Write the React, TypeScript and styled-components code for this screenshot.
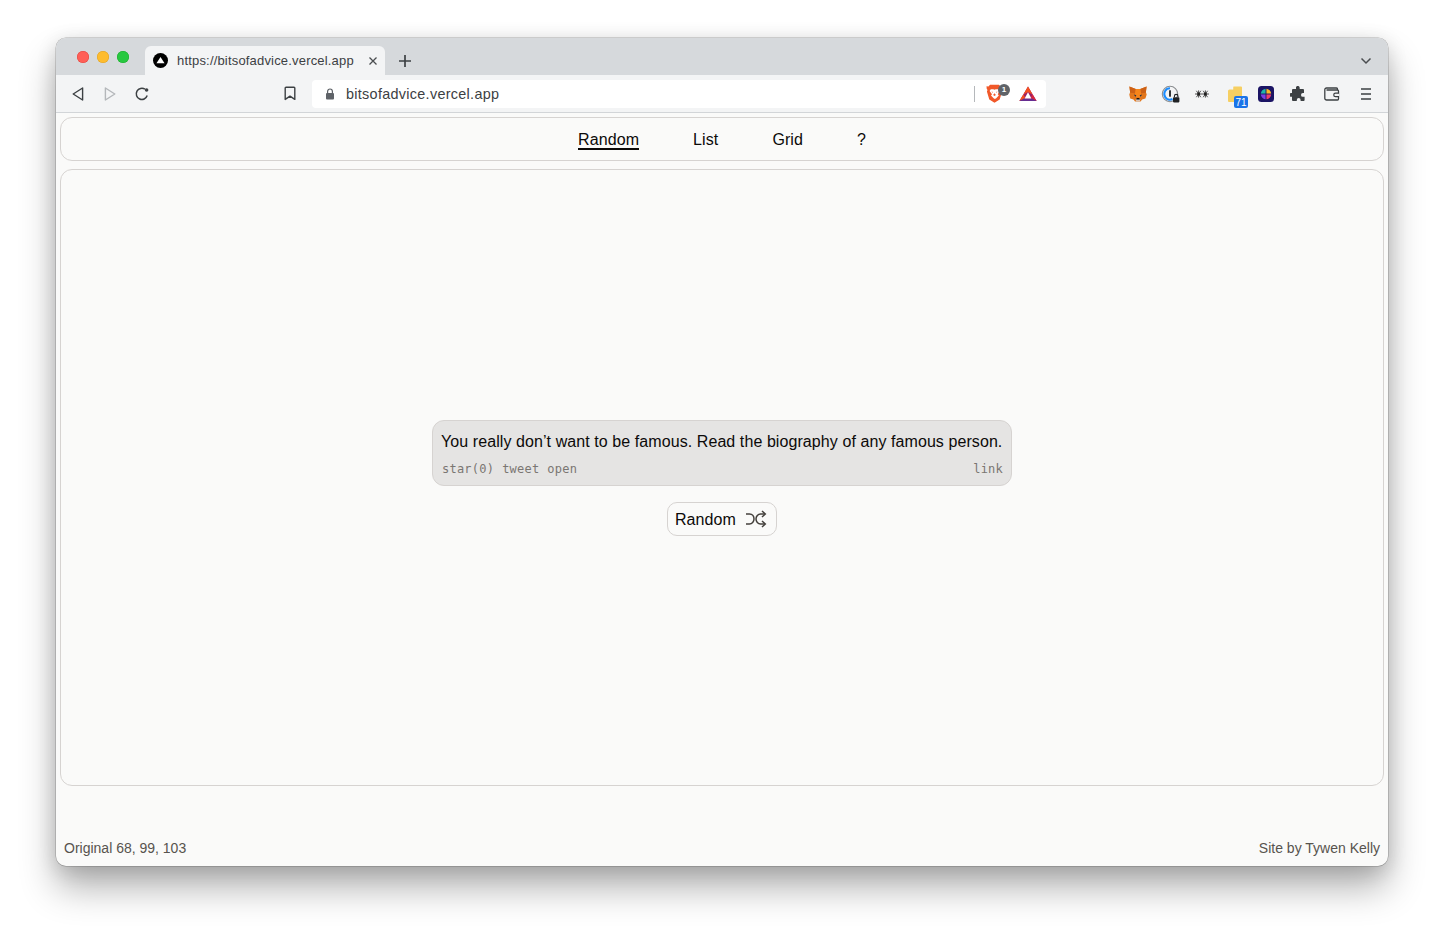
import React from "react";
import styled, { createGlobalStyle } from "styled-components";

const Global = createGlobalStyle`
  html, body { margin: 0; padding: 0; background: #fff; }
  body { font-family: "Liberation Sans", Arial, sans-serif; width: 1444px; height: 940px; overflow: hidden; }
`;
const Desktop = styled.div`
  padding: 38px 56px 74px;
  height: 940px;
  box-sizing: border-box;
`;
const Win = styled.div`
  height: 828px;
  border-radius: 10px;
  overflow: hidden;
  display: flex;
  flex-direction: column;
  background: #fafaf9;
  box-shadow: 0 0 0 0.5px rgba(0,0,0,.28), 0 22px 36px rgba(0,0,0,.30), 0 4px 20px rgba(0,0,0,.14);
`;
const TabStrip = styled.div`
  height: 37px;
  flex: none;
  background: #d6d9dc;
  display: flex;
  align-items: flex-end;
  padding-left: 21px;
  padding-right: 14px;
  box-sizing: border-box;
`;
const Lights = styled.div`
  display: flex;
  gap: 8px;
  align-self: flex-start;
  margin-top: 13px;
  width: 68px;
  flex: none;
`;
const Light = styled.span<{ $c: string; $b: string }>`
  width: 12px;
  height: 12px;
  border-radius: 50%;
  background: ${(p) => p.$c};
  box-shadow: inset 0 0 0 0.5px ${(p) => p.$b};
`;
const Tab = styled.div`
  width: 240px;
  height: 29px;
  background: #f3f4f5;
  border-radius: 6px 6px 0 0;
  display: flex;
  align-items: center;
  padding: 0 7px 0 8px;
  box-sizing: border-box;
  flex: none;
`;
const TabTitle = styled.span`
  font-size: 13px;
  letter-spacing: 0.18px;
  color: #3c4043;
  margin-left: 9px;
  flex: 1;
  white-space: nowrap;
`;
const NewTab = styled.div`
  width: 20px;
  height: 29px;
  margin-left: 10px;
  display: flex;
  align-items: center;
  justify-content: center;
  flex: none;
`;
const TabChevron = styled.div`
  margin-left: auto;
  height: 29px;
  width: 16px;
  display: flex;
  align-items: center;
  justify-content: center;
`;
const ToolBar = styled.div`
  height: 38px;
  flex: none;
  background: #f3f4f5;
  border-bottom: 1px solid #d2d5d8;
  box-sizing: border-box;
  display: flex;
  align-items: center;
  padding-left: 6px;
`;
const Slot = styled.div<{ $ml?: number }>`
  width: 32px;
  height: 28px;
  margin-left: ${(p) => p.$ml ?? 0}px;
  display: flex;
  align-items: center;
  justify-content: center;
  flex: none;
  position: relative;
`;
const UrlBar = styled.div`
  width: 734px;
  height: 28px;
  margin-left: 6px;
  background: #fff;
  border-radius: 4px;
  display: flex;
  align-items: center;
  padding: 0 2px 0 13px;
  box-sizing: border-box;
  flex: none;
`;
const UrlText = styled.span`
  font-size: 14.4px;
  letter-spacing: 0.3px;
  color: #3c4043;
  margin-left: 11px;
  flex: 1;
`;
const UrlDivider = styled.span`
  width: 1px;
  height: 16px;
  background: #b5b8bb;
  margin-right: 3px;
`;
const Exts = styled.div`
  margin-left: 76px;
  display: flex;
  align-items: center;
`;
const Count = styled.span`
  position: absolute;
  right: 2px;
  bottom: 0;
  width: 14px;
  height: 12px;
  border-radius: 2px;
  background: #1a73e8;
  color: #fff;
  font-size: 10px;
  line-height: 13px;
  text-align: center;
`;
const Shield = styled.span`
  position: absolute;
  top: 4px;
  left: 20px;
  width: 12px;
  height: 12px;
  border-radius: 50%;
  background: #5f6368;
  color: #fff;
  font-size: 8px;
  line-height: 12px;
  text-align: center;
  font-weight: bold;
`;
const Page = styled.div`
  flex: 1;
  display: flex;
  flex-direction: column;
  padding: 4px 4px 0;
  min-height: 0;
`;
const Box = styled.div`
  border: 1px solid #d6d3d1;
  border-radius: 12px;
  box-sizing: border-box;
`;
const Nav = styled(Box)`
  height: 44px;
  flex: none;
  display: flex;
  justify-content: center;
  align-items: center;
  gap: 54px;
`;
const NavLink = styled.a<{ $on?: boolean }>`
  font-size: 16px;
  line-height: 16px;
  letter-spacing: 0.1px;
  color: #0c0a09;
  padding-top: 2px;
  margin-top: 1px;
  border-bottom: 2px solid ${(p) => (p.$on ? "#0c0a09" : "transparent")};
`;
const Main = styled(Box)`
  height: 617px;
  flex: none;
  margin-top: 8px;
  display: flex;
  flex-direction: column;
  align-items: center;
  justify-content: center;
  gap: 16px;
`;
const Card = styled.div`
  width: 580px;
  height: 66px;
  background: #e5e4e3;
  border: 1px solid #d6d3d1;
  border-radius: 12px;
  box-sizing: border-box;
  padding: 11px 8px 0;
`;
const Advice = styled.div`
  font-size: 16px;
  line-height: 20px;
  letter-spacing: 0.08px;
  color: #0c0a09;
  white-space: nowrap;
`;
const Meta = styled.div`
  display: flex;
  justify-content: space-between;
  margin-top: 10px;
  padding: 0 0 0 1px;
  font-family: "DejaVu Sans Mono", "Liberation Mono", monospace;
  font-size: 12px;
  line-height: 14px;
  letter-spacing: 0.22px;
  color: #7a7672;
`;
const MetaLinks = styled.div`
  display: flex;
  gap: 8px;
`;
const RandomButton = styled.button`
  width: 110px;
  height: 34px;
  background: #fafaf9;
  border: 1px solid #d6d3d1;
  border-radius: 10px;
  box-sizing: border-box;
  padding: 2px 0 0 7px;
  display: flex;
  align-items: center;
  font-family: inherit;
  font-size: 16px;
  letter-spacing: 0.05px;
  color: #0c0a09;
  gap: 9px;
`;
const ShuffleMark = styled.svg`
  margin-top: -2px;
  flex: none;
`;
const Footer = styled.div`
  flex: 1;
  display: flex;
  justify-content: space-between;
  align-items: flex-end;
  padding: 0 4px 10px;
  font-size: 14px;
  line-height: 16px;
  color: #57534e;
`;
const FolderMark = styled.svg`
  position: absolute;
  left: 10px;
  top: 6px;
`;

const Logo = () => (
  <svg width="15" height="15" viewBox="0 0 16 16">
    <circle cx="8" cy="8" r="8" fill="#000" />
    <path d="M8 4.2 12.3 11H3.7Z" fill="#fff" />
  </svg>
);
const Plus = () => (
  <svg width="14" height="14" viewBox="0 0 14 14"><path d="M7 1v12M1 7h12" stroke="#3c4043" strokeWidth="1.7" /></svg>
);
const Close = () => (
  <svg width="10" height="10" viewBox="0 0 10 10"><path d="M1.5 1.5l7 7M8.5 1.5l-7 7" stroke="#4a4d50" strokeWidth="1.3" /></svg>
);
const Chevron = () => (
  <svg width="12" height="8" viewBox="0 0 12 8"><path d="M1.5 1.5 6 6l4.5-4.5" fill="none" stroke="#4a4d50" strokeWidth="1.5" /></svg>
);
const Back = () => (
  <svg width="12" height="14" viewBox="0 0 12 14"><path d="M10.6 1v12L1.2 7Z" fill="none" stroke="#3c4043" strokeWidth="1.4" strokeLinejoin="round" /></svg>
);
const Forward = () => (
  <svg width="12" height="14" viewBox="0 0 12 14"><path d="M1.4 1v12l9.4-6Z" fill="none" stroke="#b4b7ba" strokeWidth="1.4" strokeLinejoin="round" /></svg>
);
const Reload = () => (
  <svg width="16" height="16" viewBox="0 0 16 16">
    <path d="M13.2 9.6A5.6 5.6 0 1 1 11 3.2" fill="none" stroke="#3c4043" strokeWidth="1.5" />
    <circle cx="12.6" cy="4" r="1.8" fill="#3c4043" />
  </svg>
);
const Bookmark = () => (
  <svg width="12" height="15" viewBox="0 0 12 15"><path d="M2 1.2h8a.8.8 0 0 1 .8.8v11.4L6 10.2l-4.8 3.2V2a.8.8 0 0 1 .8-.8Z" fill="none" stroke="#3c4043" strokeWidth="1.4" strokeLinejoin="round" /></svg>
);
const Lock = () => (
  <svg width="10" height="12" viewBox="0 0 10 12">
    <path d="M2.6 5V3.4a2.4 2.4 0 0 1 4.8 0V5" fill="none" stroke="#5f6368" strokeWidth="1.2" />
    <rect x="1" y="5" width="8" height="6.4" rx="1" fill="#5f6368" />
  </svg>
);
const Brave = () => (
  <svg width="17" height="19" viewBox="0 0 17 19">
    <path d="M4 .8h9l1.5 1.8 2-.3-.2 2.400-.8 1.200.6 1.500-2.400 8L8.500 18.800 3.300 15.400.9 7.400l.6-1.500L.7 4.700.5 2.300l2 .3Z" fill="#f1592a" />
    <path d="M4.800 5.200h2.500l1.200.6 1.200-.6h2.500l1.200 1.800-1.600 3.200 1 1.300-2.600 2.800-1.300.8-1.300-.8-2.600-2.800 1-1.300L3.600 7Z" fill="#fff" />
    <path d="M8.500 9.200l-1.400 1.800 1.400 1 1.400-1ZM5.600 7.400l1.400.5-.8.8ZM11.400 7.400l-1.400.5.8.8Z" fill="#f1592a" />
  </svg>
);
const Bat = () => (
  <svg width="18" height="16" viewBox="0 0 18 16">
    <path d="M9 .6 17.600 15H.4Z" fill="#9e1f63" />
    <path d="M9 .6 13.500 8.200 10.800 7 9 6 7.200 7 4.500 8.200Z" fill="#f5501e" />
    <path d="M.4 15 4.500 8.200 6 11.500 4.800 13.400Z" fill="#f5501e" />
    <path d="M17.600 15 13.500 8.200 12 11.500 13.200 13.400Z" fill="#d9263e" />
    <path d="M.4 15h17.200l-4.400-2.400H4.800Z" fill="#662d91" />
    <path d="M9 6.200 12.400 12.400H5.600Z" fill="#fff" />
  </svg>
);
const Fox = () => (
  <svg width="18" height="16" viewBox="0 0 18 16">
    <path d="M.4.4 6.800 3h4.400L17.600.4l-.7 5.800.8 2.400-1.300 3.800-3.300 1-1.500 2.200H6l-1.500-2.200-3.300-1L.3 8.600l.8-2.400Z" fill="#e2761b" />
    <path d="M.4.4 6.800 3 6 7.200 1.200 6.800ZM17.600.4 11.200 3l.8 4.200 4.800-.4Z" fill="#cd6116" />
    <path d="M6.800 3h4.400l.8 4.200-1.200 4H7.200L6 7.200Z" fill="#f6851b" />
    <path d="M4.800 8.600 7.400 9.200 6.400 10.800ZM13.200 8.600l-2.600.6 1 1.600Z" fill="#233447" />
    <path d="M6.600 13h4.800l-.6 2.400H7.200Z" fill="#d7c1b3" />
    <path d="M7.800 12h2.400l.6 1.400H7.200Z" fill="#161616" />
  </svg>
);
const OnePassword = () => (
  <svg width="20" height="20" viewBox="0 0 20 20">
    <circle cx="10" cy="10" r="7.700" fill="none" stroke="#8a8d90" strokeWidth="1.100" />
    <path d="M10 4.300A5.700 5.700 0 0 0 5.200 13.100 5.700 5.700 0 0 0 12.500 15" fill="none" stroke="#1a8cff" strokeWidth="2" />
    <rect x="9" y="6.300" width="2" height="6.400" fill="#33363a" />
    <rect x="13" y="13.200" width="6.400" height="5.200" rx=".8" fill="#1f2124" />
    <path d="M14.400 13.200V12.200a1.800 1.800 0 0 1 3.600 0v1" fill="none" stroke="#1f2124" strokeWidth="1.100" />
  </svg>
);
const Eyes = () => (
  <svg width="14" height="8" viewBox="0 0 14 8">
    <path d="M0 4h14M1.400.8l4.400 6.400M5.800.8 1.400 7.200M8.200.8l4.400 6.400M12.600.8 8.200 7.200M3.600.4v7.200M10.400.4v7.200" stroke="#2a2a2a" strokeWidth=".8" />
    <circle cx="3.600" cy="4" r="1.500" fill="#1f1f1f" />
    <circle cx="10.400" cy="4" r="1.500" fill="#1f1f1f" />
  </svg>
);
const Folder = () => (
  <FolderMark width="15" height="16" viewBox="0 0 15 16">
    <path d="M1.500 3.500H5V1.500a1 1 0 0 1 1-1h7a1 1 0 0 1 1 1V16H1a1 1 0 0 1-1-1V5a1.500 1.500 0 0 1 1.500-1.500Z" fill="#f6cf62" />
    <path d="M5 3.500V1" stroke="#fff" strokeWidth=".6" opacity=".7" />
  </FolderMark>
);
const Palette = () => (
  <svg width="16" height="16" viewBox="0 0 16 16">
    <rect width="16" height="16" rx="3.500" fill="#1b1464" />
    <path d="M8 8V2.800A5.200 5.200 0 0 1 13.200 8Z" fill="#f9b824" />
    <path d="M8 8h5.200A5.200 5.200 0 0 1 8 13.200Z" fill="#ee3d6b" />
    <path d="M8 8v5.200A5.200 5.200 0 0 1 2.800 8Z" fill="#7b3fe4" />
    <path d="M8 8H2.800A5.200 5.200 0 0 1 8 2.800Z" fill="#1fb5a8" />
    <path d="M8 2.500v11M2.500 8h11" stroke="#1b1464" strokeWidth=".9" />
  </svg>
);
const Puzzle = () => (
  <svg width="16" height="16" viewBox="0 0 16 16">
    <path d="M6 1.200a1.900 1.900 0 0 1 3.700.6V3H13a1 1 0 0 1 1 1v3h-1.100a1.900 1.900 0 0 0 0 3.800H14.600V14a1 1 0 0 1-1 1h-3v-1a1.900 1.900 0 0 0-3.800 0v1H3a1 1 0 0 1-1-1v-3.300H1.200a1.900 1.900 0 0 1 0-3.800H2V4a1 1 0 0 1 1-1h3Z" fill="#3c4043" />
  </svg>
);
const Wallet = () => (
  <svg width="16" height="14" viewBox="0 0 16 14">
    <path d="M13.500 3V2a1 1 0 0 0-1-1H2.500A1.700 1.700 0 0 0 .8 2.700V11.200A1.800 1.800 0 0 0 2.600 13h10.900a1 1 0 0 0 1-1V4a1 1 0 0 0-1-1H2.500" fill="none" stroke="#3c4043" strokeWidth="1.300" />
    <path d="M15 6.200h-3.500a1.700 1.700 0 0 0 0 3.500H15" fill="#f3f4f5" stroke="#3c4043" strokeWidth="1.200" />
  </svg>
);
const Menu = () => (
  <svg width="10" height="12" viewBox="0 0 10 12"><path d="M0 1h10M0 6h10M0 11h10" stroke="#3c4043" strokeWidth="1.400" /></svg>
);
const Shuffle = () => (
  <ShuffleMark width="22" height="18" viewBox="0 0 22 18">
    <path d="M1 4h3.500c3 0 4.500 2.500 4.500 5s-2 5-4.500 5H1M20 4h-4.500C13 4 11 6.500 11 9s2 5 4.500 5H20" fill="none" stroke="#44403c" strokeWidth="1.500" />
    <path d="M17 1l3.300 3L17 7M17 11l3.300 3L17 17" fill="none" stroke="#44403c" strokeWidth="1.500" />
  </ShuffleMark>
);

export default function App() {
  return (
    <>
      <Global />
      <Desktop>
        <Win>
          <TabStrip>
            <Lights>
              <Light $c="#ff5f57" $b="#e0443e" />
              <Light $c="#febc2e" $b="#dea123" />
              <Light $c="#28c840" $b="#1aab29" />
            </Lights>
            <Tab>
              <Logo />
              <TabTitle>https://bitsofadvice.vercel.app</TabTitle>
              <Close />
            </Tab>
            <NewTab><Plus /></NewTab>
            <TabChevron><Chevron /></TabChevron>
          </TabStrip>
          <ToolBar>
            <Slot><Back /></Slot>
            <Slot><Forward /></Slot>
            <Slot><Reload /></Slot>
            <Slot $ml={116}><Bookmark /></Slot>
            <UrlBar>
              <Lock />
              <UrlText>bitsofadvice.vercel.app</UrlText>
              <UrlDivider />
              <Slot><Brave /><Shield>1</Shield></Slot>
              <Slot $ml={2}><Bat /></Slot>
            </UrlBar>
            <Exts>
              <Slot><Fox /></Slot>
              <Slot><OnePassword /></Slot>
              <Slot><Eyes /></Slot>
              <Slot><Folder /><Count>71</Count></Slot>
              <Slot><Palette /></Slot>
              <Slot><Puzzle /></Slot>
              <Slot $ml={2}><Wallet /></Slot>
              <Slot $ml={2}><Menu /></Slot>
            </Exts>
          </ToolBar>
          <Page>
            <Nav>
              <NavLink $on>Random</NavLink>
              <NavLink>List</NavLink>
              <NavLink>Grid</NavLink>
              <NavLink>?</NavLink>
            </Nav>
            <Main>
              <Card>
                <Advice>You really don’t want to be famous. Read the biography of any famous person.</Advice>
                <Meta>
                  <MetaLinks>
                    <span>star(0)</span>
                    <span>tweet</span>
                    <span>open</span>
                  </MetaLinks>
                  <span>link</span>
                </Meta>
              </Card>
              <RandomButton>
                Random
                <Shuffle />
              </RandomButton>
            </Main>
            <Footer>
              <span>Original 68, 99, 103</span>
              <span>Site by Tywen Kelly</span>
            </Footer>
          </Page>
        </Win>
      </Desktop>
    </>
  );
}
